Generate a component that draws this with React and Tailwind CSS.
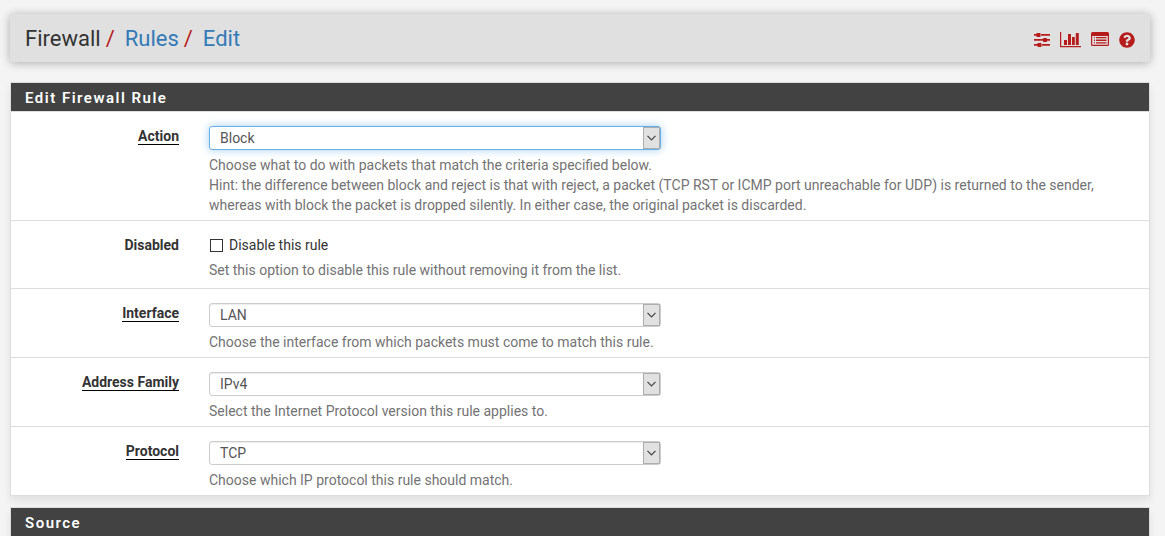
import { FaQuestionCircle } from 'react-icons/fa';

const fields = [
  {
    id: 'action',
    label: 'Action',
    required: true,
    options: ['Block', 'Pass', 'Reject'],
    focused: true,
    help: [
      'Choose what to do with packets that match the criteria specified below.',
      'Hint: the difference between block and reject is that with reject, a packet (TCP RST or ICMP port unreachable for UDP) is returned to the sender, whereas with block the packet is dropped silently. In either case, the original packet is discarded.',
    ],
  },
  {
    id: 'disabled',
    label: 'Disabled',
    checkbox: 'Disable this rule',
    help: ['Set this option to disable this rule without removing it from the list.'],
  },
  {
    id: 'interface',
    label: 'Interface',
    required: true,
    options: ['LAN', 'WAN'],
    help: ['Choose the interface from which packets must come to match this rule.'],
  },
  {
    id: 'ipprotocol',
    label: 'Address Family',
    required: true,
    options: ['IPv4', 'IPv6', 'IPv4+IPv6'],
    help: ['Select the Internet Protocol version this rule applies to.'],
  },
  {
    id: 'proto',
    label: 'Protocol',
    required: true,
    options: ['TCP', 'UDP', 'TCP/UDP', 'ICMP', 'Any'],
    help: ['Choose which IP protocol this rule should match.'],
  },
];

const SlidersIcon = () => (
  <svg width="16" height="16" viewBox="0 0 16 16" fill="currentColor" aria-hidden="true">
    <path d="M0 2h3v1.800H0zM7 2h9v1.800H7zM0 7h9v1.800H0zM13 7h3v1.800h-3zM0 12h4v1.800H0zM8 12h8v1.800H8z" />
    <rect x="2.500" y="1" width="4" height="4" rx="0.6" />
    <rect x="9" y="6" width="4" height="4" rx="0.6" />
    <rect x="3.500" y="11" width="4" height="4" rx="0.6" />
  </svg>
);

const ChartIcon = () => (
  <svg width="21" height="16" viewBox="0 0 21 16" fill="currentColor" aria-hidden="true">
    <path d="M0 0h1.200v14H21v1.200H0z" />
    <path d="M4 8h3v5H4zM8 2h3v11H8zM12 5h2.800v8H12zM15.800 1h3v12h-3z" />
  </svg>
);

const ListIcon = () => (
  <svg width="18" height="16" viewBox="0 0 18 16" fill="currentColor" aria-hidden="true">
    <path
      fillRule="evenodd"
      d="M1.500 0h15A1.500 1.500 0 0 1 18 1.500v11a1.500 1.500 0 0 1-1.500 1.500h-15A1.500 1.500 0 0 1 0 12.500v-11A1.500 1.500 0 0 1 1.500 0zM1.200 4v8.500c0 .2.100.3.300.3h15c.2 0 .3-.1.300-.3V4z"
    />
    <path d="M3 5h1v1.300H3zM5 5h10.500v1.300H5zM3 7.600h1v1.300H3zM5 7.600h10.500v1.300H5zM3 10.200h1v1.300H3zM5 10.200h10.500v1.300H5z" />
  </svg>
);

function Panel({ title, children }) {
  return (
    <section className="border border-[#dddddd] bg-white shadow-[0_5px_8px_rgba(0,0,0,0.08)]">
      <h2 className="h-7 bg-[#424242] px-3.5 pt-px text-[15px] leading-7 font-semibold tracking-widest text-white">{title}</h2>
      {children}
    </section>
  );
}

function SelectBox({ id, options, focused }) {
  return (
    <div className="relative w-[49%]">
      <select
        id={id}
        className={
          focused
            ? 'block h-6 w-full appearance-none rounded-[3px] border border-[#66afe9] bg-white px-2.5 text-sm leading-5 text-[#555555] shadow-[0_0_8px_rgba(102,175,233,0.6)] outline-none'
            : 'block h-6 w-full appearance-none rounded-[3px] border border-[#cccccc] bg-white px-2.5 text-sm leading-5 text-[#555555] shadow-[inset_0_1px_1px_rgba(0,0,0,0.075)] outline-none'
        }
      >
        {options.map((option) => <option key={option}>{option}</option>)}
      </select>
      {/* arrow button over the right end of the select */}
      <span className="pointer-events-none absolute inset-y-px right-px flex w-[17px] items-center justify-center border border-[#adadad] bg-[#e1e1e1]">
        <svg width="9" height="6" viewBox="0 0 9 6" fill="none" stroke="#444444" strokeWidth="1.2" aria-hidden="true">
          <path d="M0.500 0.800l4 4 4-4" />
        </svg>
      </span>
    </div>
  );
}

function FormRow({ field }) {
  return (
    <div className={field.checkbox
      ? 'grid grid-cols-[168px_1fr] gap-x-[30px] pt-3.5 pr-[18px] pb-2'
      : 'grid grid-cols-[168px_1fr] gap-x-[30px] pt-3.5 pr-[18px] pb-[5px]'}
    >
      <label htmlFor={field.id} className="text-right font-bold text-[#333333]">
        <span className={field.required ? 'border-b border-black' : ''}>{field.label}</span>
      </label>
      <div>
        {field.checkbox ? (
          <label className="flex items-center gap-1.5 text-[#333333]">
            <input
              id={field.id}
              type="checkbox"
              className="ml-px size-[13px] appearance-none border border-[#333333] bg-white checked:bg-[#333333]"
            />
            {field.checkbox}
          </label>
        ) : (
          <SelectBox id={field.id} options={field.options} focused={field.focused} />
        )}
        <div className="mt-[5px] text-[#737373]">
          {field.help.map((line) => <p key={line}>{line}</p>)}
        </div>
      </div>
    </div>
  );
}

function App() {
  return (
    <div className="min-h-screen bg-[#f4f4f4] pt-3.5 pr-[15px] pl-2.5 font-[Roboto,sans-serif] text-sm leading-5">
      <header className="flex h-12 items-center justify-between rounded-[3px] bg-[#e0e0e0] px-[15px] pt-0.5 shadow-[0_1px_10px_rgba(0,0,0,0.3)]">
        <nav aria-label="Breadcrumb">
          <ol className="flex text-[22px] leading-7 text-[#333333]">
            <li>Firewall</li>
            <li className="flex">
              <span className="pr-2.5 pl-[5px] text-[#b71c1c]">/</span>
              <a href="#rules" className="text-[#337ab7]">Rules</a>
            </li>
            <li className="flex">
              <span className="pr-2.5 pl-[5px] text-[#b71c1c]">/</span>
              <a href="#edit" className="text-[#337ab7]">Edit</a>
            </li>
          </ol>
        </nav>
        <div className="flex items-center gap-2.5 pt-0.5 text-[#b71c1c]">
          <a href="#settings" aria-label="Related settings"><SlidersIcon /></a>
          <a href="#status" aria-label="Related status"><ChartIcon /></a>
          <a href="#logs" aria-label="Related log entries"><ListIcon /></a>
          <a href="#help" aria-label="Help"><FaQuestionCircle size={16} /></a>
        </div>
      </header>

      <main className="flex flex-col gap-[11px] pt-5">
        <Panel title="Edit Firewall Rule">
          <form className="divide-y divide-[#dddddd] border-t border-[#dddddd]">
            {fields.map((field) => <FormRow key={field.id} field={field} />)}
          </form>
        </Panel>
        <Panel title="Source" />
      </main>
    </div>
  );
}

export default App;
